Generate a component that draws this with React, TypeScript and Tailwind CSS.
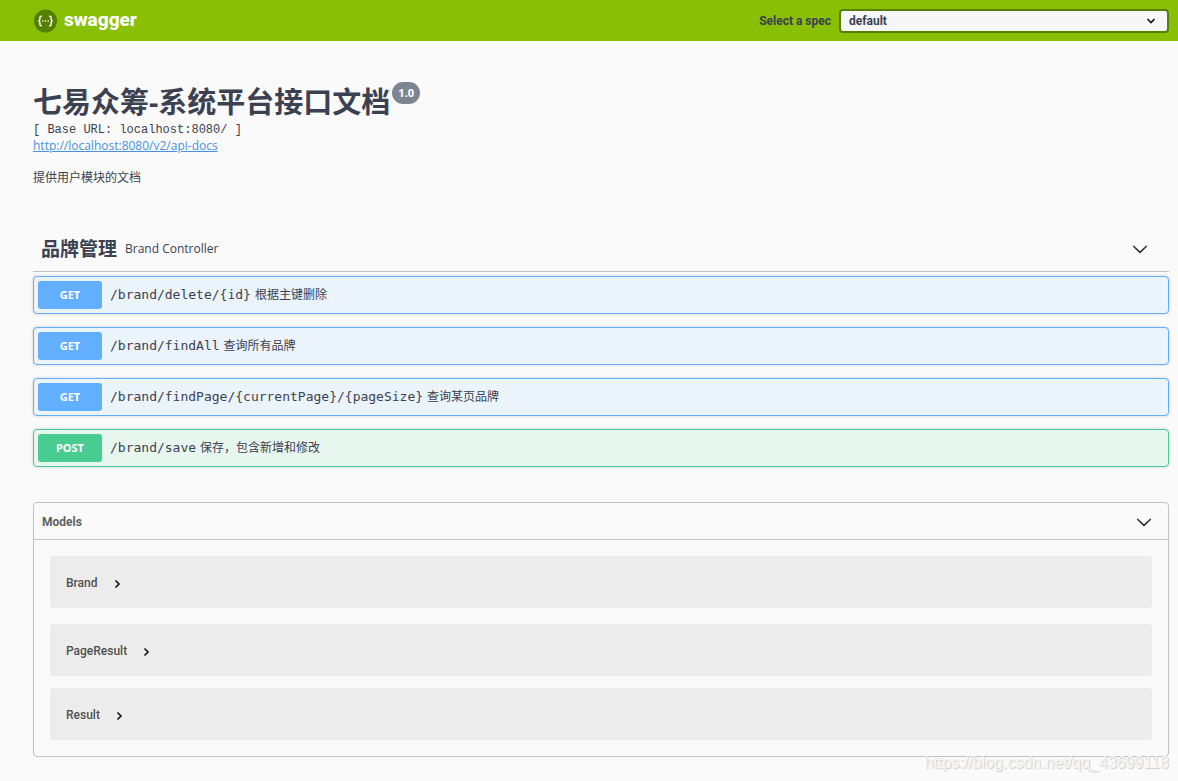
interface Operation {
  method: 'GET' | 'POST';
  path: string;
  summary: string;
}

const operations: Operation[] = [
  { method: 'GET', path: '/brand/delete/{id}', summary: '根据主键删除' },
  { method: 'GET', path: '/brand/findAll', summary: '查询所有品牌' },
  { method: 'GET', path: '/brand/findPage/{currentPage}/{pageSize}', summary: '查询某页品牌' },
  { method: 'POST', path: '/brand/save', summary: '保存，包含新增和修改' },
];

const methodStyles = {
  GET: { row: 'border-[#61affe] bg-[#ebf3fb]', badge: 'bg-[#61affe]' },
  POST: { row: 'border-[#49cc90] bg-[#e8f6f0]', badge: 'bg-[#49cc90]' },
};

function LargeArrow() {
  return (
    <svg className="h-4 w-4 shrink-0" viewBox="0 0 20 20" aria-hidden="true">
      <path
        fill="#1c1c1c"
        stroke="#1c1c1c"
        strokeWidth="0.4"
        d="M17.418 6.109c.272-.268.709-.268.979 0s.271.701 0 .969l-7.908 7.83c-.27.268-.707.268-.979 0l-7.908-7.83c-.27-.268-.27-.701 0-.969.271-.268.709-.268.979 0L10 13.25l7.418-7.141z"
      />
    </svg>
  );
}

function SwaggerMark() {
  return (
    <svg className="h-6 w-6" viewBox="0 0 24 24" fill="none" aria-hidden="true">
      <circle cx="12.5" cy="12" r="11.5" fill="#547f00" />
      <g stroke="#fff" strokeWidth="1.4">
        <path d="M8.9 7.3H8.3C7.3 7.3 6.9 7.8 6.9 8.6V10.3C6.9 11.3 6.4 12 5.3 12C6.4 12 6.9 12.7 6.9 13.7V15.4C6.9 16.2 7.3 16.7 8.3 16.7H8.9" />
        <path d="M16.1 7.3H16.7C17.7 7.3 18.1 7.8 18.1 8.6V10.3C18.1 11.3 18.6 12 19.7 12C18.6 12 18.1 12.7 18.1 13.7V15.4C18.1 16.2 17.7 16.7 16.7 16.7H16.1" />
      </g>
      <g fill="#fff">
        <circle cx="9.8" cy="12" r="0.8" />
        <circle cx="12.5" cy="12" r="0.8" />
        <circle cx="15.2" cy="12" r="0.8" />
      </g>
    </svg>
  );
}

function Topbar() {
  return (
    <header className="flex h-[41px] items-center justify-between bg-[#89bf04] pr-[9px] pl-[33px]">
      <a href="#" className="flex items-center gap-[7px] font-['Roboto',sans-serif] text-[19px] font-extrabold text-white">
        <SwaggerMark />
        <span>swagger</span>
      </a>
      <div className="flex items-center gap-2">
        <label htmlFor="spec" className="font-['Roboto',sans-serif] text-xs font-bold text-[#3b4151]">
          Select a spec
        </label>
        <div className="relative">
          <select
            id="spec"
            className="block h-6 w-[330px] appearance-none rounded-[4px] border-2 border-[#547f00] bg-[#f7f7f7] pl-2 font-['Roboto',sans-serif] text-xs font-bold text-[#3b4151]"
          >
            <option>default</option>
          </select>
          <svg className="pointer-events-none absolute top-2 right-3 h-2 w-3" viewBox="0 0 12 8" fill="none" aria-hidden="true">
            <path d="M2.5 2L6 5.5L9.5 2" stroke="#111" strokeWidth="1.6" />
          </svg>
        </div>
      </div>
    </header>
  );
}

function OperationRow({ method, path, summary }: Operation) {
  const styles = methodStyles[method];

  return (
    <button
      className={`flex h-[38px] w-full items-center rounded-[4px] border pl-1 text-left shadow-[0_0_3px_rgba(0,0,0,0.19)] ${styles.row}`}
    >
      <span
        className={`h-7 w-16 rounded-[3px] text-center font-['Noto_Sans',sans-serif] text-[11px] leading-7 font-bold text-white ${styles.badge}`}
      >
        {method}
      </span>
      <span className="ml-2 font-['DejaVu_Sans_Mono',monospace] text-[13px]">{path}</span>
      <span className="ml-1 text-xs">{summary}</span>
    </button>
  );
}

function ModelBox({ name }: { name: string }) {
  return (
    <button className="flex h-[52px] w-full items-center gap-[13px] rounded-[4px] bg-[#ececec] pt-0.5 pl-4 text-left font-['Roboto',sans-serif] text-xs font-medium text-[#505050]">
      {name}
      <svg className="mt-0.5 h-3 w-3" viewBox="0 0 12 12" fill="none" aria-hidden="true">
        <path d="M4.5 2.5L8 6L4.5 9.5" stroke="#111" strokeWidth="1.6" />
      </svg>
    </button>
  );
}

export default function App() {
  return (
    <div className="relative min-h-screen bg-[#fafafa] pb-6 font-['Open_Sans','Noto_Sans_CJK_SC',sans-serif] text-[#3b4151]">
      <Topbar />

      <main className="pr-[9px] pl-[33px]">
        {/* Info */}
        <section className="pt-[41px]">
          <div className="flex items-start gap-0.5">
            <h1 className="text-[29px] leading-10 font-bold">七易众筹-系统平台接口文档</h1>
            <span className="rounded-full bg-[#7d8492] px-1.5 text-[11px] leading-[22px] font-bold text-white">1.0</span>
          </div>
          <pre className="font-['Liberation_Mono',monospace] text-xs leading-4">[ Base URL: localhost:8080/ ]</pre>
          <a href="http://localhost:8080/v2/api-docs" className="block text-xs leading-4 text-[#4990e2] underline">
            http://localhost:8080/v2/api-docs
          </a>
          <p className="mt-4 text-xs leading-4">提供用户模块的文档</p>
        </section>

        {/* Operations */}
        <section className="mt-10">
          <div className="flex h-[46px] items-center gap-2 border-b border-[#c0c2c5] pr-[21px] pl-2">
            <h2 className="text-[19px] leading-6 font-bold">品牌管理</h2>
            <span className="flex-1 text-xs">Brand Controller</span>
            <button aria-label="Collapse operation">
              <LargeArrow />
            </button>
          </div>
          <div className="mt-1 flex flex-col gap-[13px]">
            {operations.map((operation) => (
              <OperationRow key={operation.path} {...operation} />
            ))}
          </div>
        </section>

        {/* Models */}
        <section className="mt-[35px] rounded-[4px] border border-[#c0c2c5]">
          <button className="flex h-[37px] w-full items-center justify-between border-b border-[#c0c2c5] pt-0.5 pr-4 pl-2">
            <span className="font-['Roboto',sans-serif] text-xs font-bold text-[#606060]">Models</span>
            <LargeArrow />
          </button>
          <div className="p-4">
            <ModelBox name="Brand" />
            <div className="mt-4 flex flex-col gap-3">
              <ModelBox name="PageResult" />
              <ModelBox name="Result" />
            </div>
          </div>
        </section>
      </main>

      <span className="absolute right-[9px] bottom-2 font-['Liberation_Sans',sans-serif] text-base leading-5 text-[#f4f4f4] [text-shadow:1px_1px_1px_#ccc]">
        https://blog.csdn.net/qq_43699118
      </span>
    </div>
  );
}
